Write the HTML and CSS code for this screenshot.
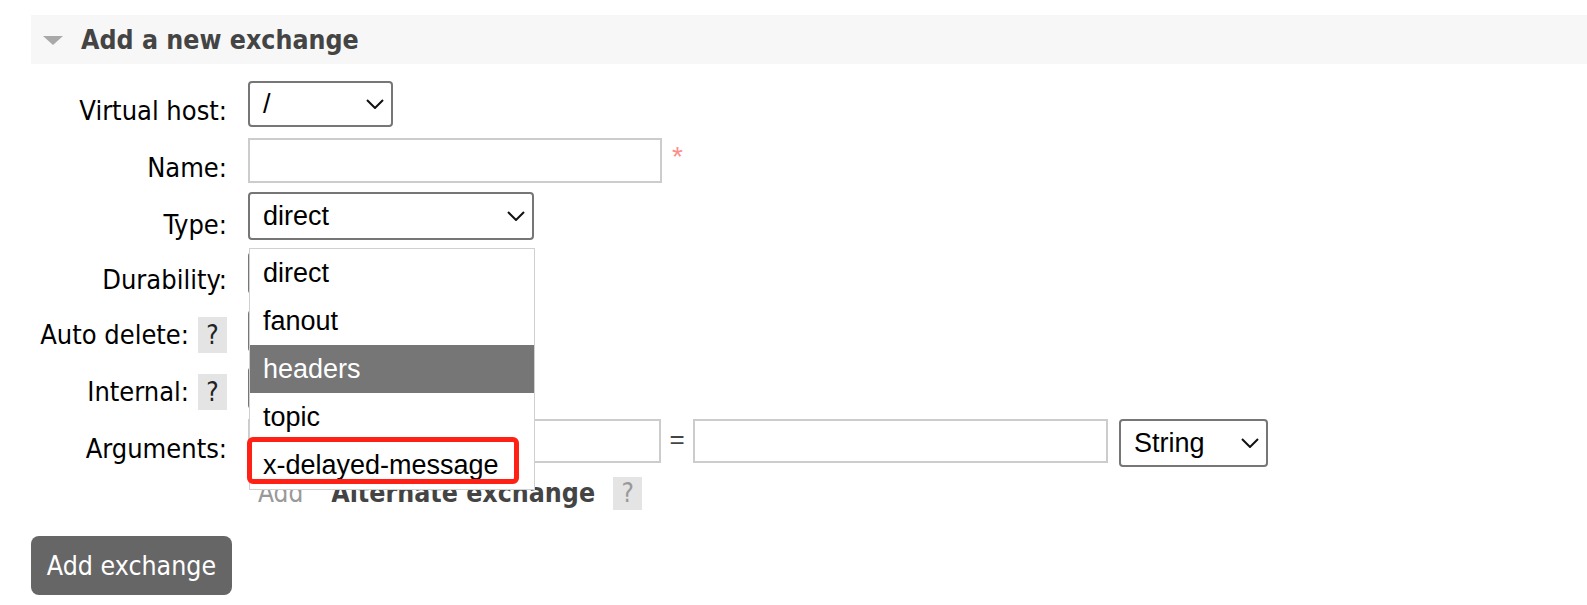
FILE: index.html
```html
<!DOCTYPE html>
<html>
<head>
<meta charset="utf-8">
<link rel="stylesheet" href="styles.css">
</head>
<body>
<div class="section">
  <h2 class="section-head"><span class="tri"></span>Add a new exchange</h2>
  <div class="form">
    <div class="lbl">Virtual host:</div>
    <div class="val">
      <div class="select sel-vhost"><span>/</span><svg class="chev" width="18" height="10" viewBox="0 0 18 10"><path d="M1 1 L9 9 L17 1" fill="none" stroke="#111" stroke-width="2"/></svg></div>
    </div>

    <div class="lbl">Name:</div>
    <div class="val">
      <div class="input inp-name"></div><span class="req">*</span>
    </div>

    <div class="lbl lbl-type">Type:</div>
    <div class="val">
      <div class="select-wrap">
        <div class="select sel-type"><span>direct</span><svg class="chev" width="18" height="10" viewBox="0 0 18 10"><path d="M1 1 L9 9 L17 1" fill="none" stroke="#111" stroke-width="2"/></svg></div>
        <ul class="dropdown">
          <li>direct</li>
          <li>fanout</li>
          <li class="hl">headers</li>
          <li>topic</li>
          <li>x-delayed-message</li>
          <li class="annot"></li>
        </ul>
      </div>
    </div>

    <div class="lbl">Durability:</div>
    <div class="val">
      <div class="select sel-hidden"></div>
    </div>

    <div class="lbl has-help">Auto delete:<span class="help">?</span></div>
    <div class="val">
      <div class="select sel-hidden"></div>
    </div>

    <div class="lbl has-help">Internal:<span class="help">?</span></div>
    <div class="val">
      <div class="select sel-hidden"></div>
    </div>

    <div class="lbl">Arguments:</div>
    <div class="val args">
      <div class="input inp-arg"></div>
      <span class="eq">=</span>
      <div class="input inp-arg2"></div>
      <div class="select sel-string"><span>String</span><svg class="chev" width="18" height="10" viewBox="0 0 18 10"><path d="M1 1 L9 9 L17 1" fill="none" stroke="#111" stroke-width="2"/></svg></div>
    </div>

    <div class="lbl"></div>
    <div class="val alt">
      <span class="add-link">Add</span>
      <span class="alt-title">Alternate exchange</span>
      <span class="help help-muted">?</span>
    </div>
  </div>
  <button class="btn">Add exchange</button>
</div>
</body>
</html>
```

FILE: styles.css
```css
html, body {
  margin: 0;
  padding: 0;
  background: #fff;
}

body {
  font-family: "DejaVu Sans Condensed", "DejaVu Sans", sans-serif;
  font-stretch: condensed;
  color: #000;
}

.section {
  padding-top: 15px;
}

.section-head {
  margin: 0 0 0 31px;
  height: 49px;
  background: #f7f7f7;
  display: flex;
  align-items: center;
  font-size: 26.5px;
  font-weight: bold;
  color: #444;
  line-height: 49px;
}

.tri {
  width: 0;
  height: 0;
  border-left: 10px solid transparent;
  border-right: 10px solid transparent;
  border-top: 9px solid #a9a9a9;
  margin: 2px 18px 0 12px;
}

.form {
  display: grid;
  grid-template-columns: 196px auto;
  grid-template-rows: 57px 54px 58px 58px 57px 54px 57px 33px;
  column-gap: 21px;
  margin: 17px 0 0 31px;
}

.lbl {
  font-size: 27px;
  line-height: 36px;
  padding-top: 12px;
  text-align: right;
  display: flex;
  justify-content: flex-end;
  align-items: baseline;
  color: #000;
  white-space: nowrap;
}

.lbl.lbl-type {
  padding-top: 15px;
}

.lbl.has-help {
  padding-top: 9px;
}

.help {
  display: inline-block;
  width: 29px;
  height: 36px;
  line-height: 36px;
  background: #e4e4e4;
  color: #222;
  text-align: center;
  margin-left: 9px;
  font-size: 26px;
}

.val {
  display: flex;
  align-items: flex-start;
}

.select {
  box-sizing: border-box;
  border: 2px solid #767676;
  border-radius: 4px;
  background: #fff;
  display: flex;
  align-items: center;
  justify-content: space-between;
  padding: 0 7px 0 13px;
  font-family: "Liberation Sans", Arial, sans-serif;
  font-size: 27px;
  color: #000;
}

.sel-vhost {
  width: 145px;
  height: 46px;
}

.sel-type {
  width: 286px;
  height: 48px;
}

.sel-hidden {
  width: 200px;
  height: 42px;
  margin-top: 2px;
}

.sel-string {
  width: 149px;
  height: 48px;
  margin-left: 11px;
}

.chev {
  display: block;
  flex: none;
}

.input {
  box-sizing: border-box;
  border: 2px solid #cccccc;
  background: #fff;
}

.inp-name {
  width: 414px;
  height: 45px;
}

.req {
  font-family: "Liberation Sans", Arial, sans-serif;
  color: #ff8c8c;
  font-size: 28px;
  line-height: 28px;
  margin: 5px 0 0 10px;
}

.select-wrap {
  position: relative;
}

.dropdown {
  position: absolute;
  z-index: 10;
  top: 56px;
  left: 1px;
  width: 284px;
  margin: 0;
  padding: 0;
  list-style: none;
  background: #fff;
  border: 1px solid #d0d0d0;
  font-family: "Liberation Sans", Arial, sans-serif;
  font-size: 27px;
}

.dropdown li {
  height: 48px;
  line-height: 48px;
  padding-left: 13px;
  color: #000;
}

.dropdown li.hl {
  background: #767676;
  color: #fff;
}

.dropdown li.annot {
  position: absolute;
  left: -3px;
  top: 188px;
  width: 272px;
  height: 47px;
  padding: 0;
  box-sizing: border-box;
  border: 5px solid #ff2116;
  border-radius: 6px;
}

.args .inp-arg {
  width: 413px;
  height: 44px;
}

.args .inp-arg2 {
  width: 415px;
  height: 44px;
}

.eq {
  width: 32px;
  text-align: center;
  font-size: 26px;
  line-height: 40px;
  color: #444;
  font-family: "Liberation Sans", Arial, sans-serif;
}

.alt {
  align-items: baseline;
}

.add-link {
  font-size: 26px;
  line-height: 33px;
  color: #999;
  margin-left: 10px;
}

.alt-title {
  display: inline-block;
  font-size: 26.5px;
  font-weight: bold;
  color: #444;
  line-height: 33px;
  margin-left: 28px;
  clip-path: inset(9px 0 0 0);
}

.help-muted {
  height: 33px;
  line-height: 33px;
  color: #999;
  margin-left: 18px;
}

.btn {
  display: block;
  margin: 27px 0 0 31px;
  width: 201px;
  height: 59px;
  border: none;
  border-radius: 8px;
  background: #666;
  color: #fff;
  font-family: "DejaVu Sans Condensed", "DejaVu Sans", sans-serif;
  font-stretch: condensed;
  font-size: 26.5px;
  padding: 0;
}
```
